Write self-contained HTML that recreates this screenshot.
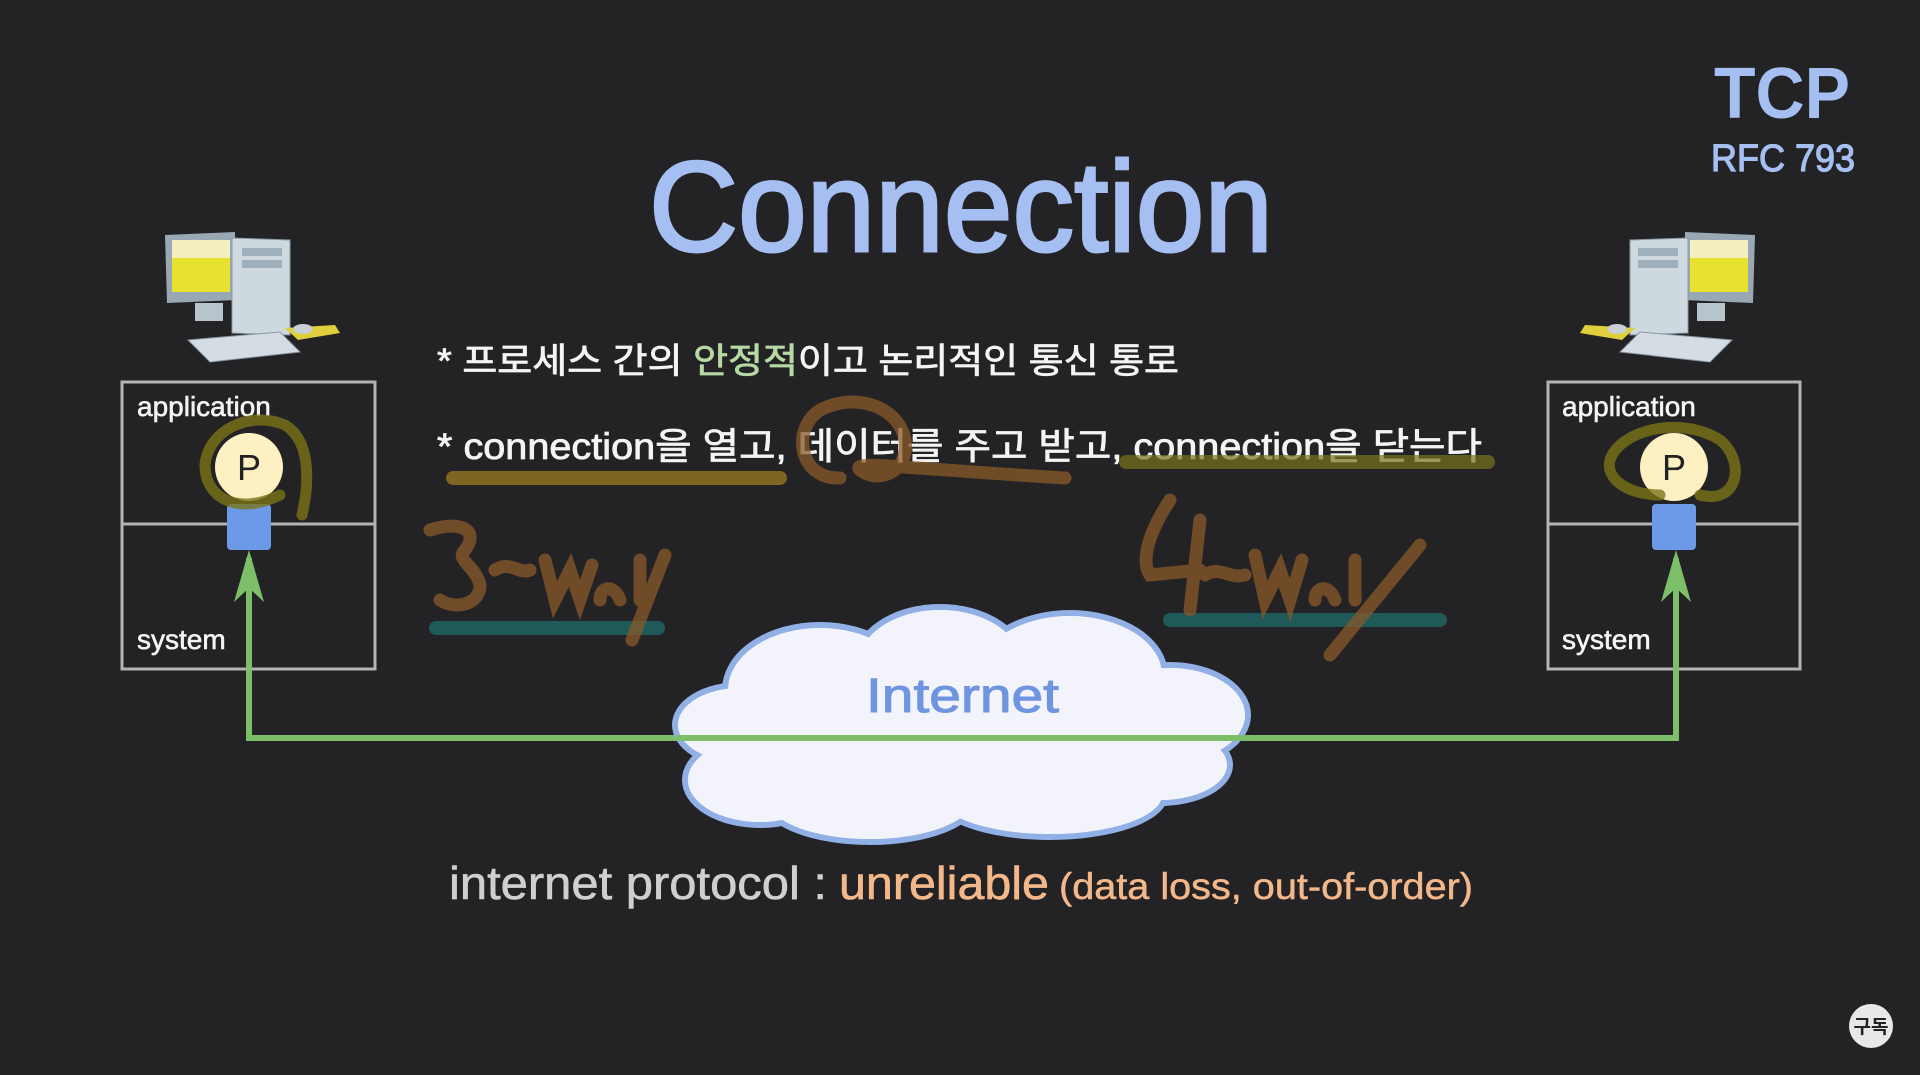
<!DOCTYPE html>
<html><head><meta charset="utf-8"><style>
html,body{margin:0;padding:0;background:#232224;}
svg{display:block}
text{font-family:"Liberation Sans","Noto Sans CJK KR",sans-serif}
</style></head><body>
<svg width="1920" height="1075" viewBox="0 0 1920 1075" xmlns="http://www.w3.org/2000/svg">
<rect width="1920" height="1075" fill="#232224"/>
<text x="1714" y="118" font-size="72" font-weight="bold" fill="#a6bff2" textLength="136" lengthAdjust="spacingAndGlyphs">TCP</text>
<text x="1711" y="171" font-size="38" fill="#a6bff2" stroke="#a6bff2" stroke-width="1.2" textLength="144" lengthAdjust="spacingAndGlyphs">RFC 793</text>
<text x="649" y="251" font-size="128" fill="#a6bff2" stroke="#a6bff2" stroke-width="3" textLength="624" lengthAdjust="spacingAndGlyphs">Connection</text>

<g id="pc">
<polygon points="165,235 235,232 237,300 167,303" fill="#9aa8b4"/>
<rect x="172" y="240" width="58" height="52" fill="#e7e230"/>
<rect x="172" y="240" width="58" height="18" fill="#f3efc0"/>
<polygon points="232,238 290,240 290,335 232,333" fill="#cdd8df" stroke="#8a98a4"/>
<rect x="242" y="248" width="40" height="8" fill="#9fb0bc"/><rect x="242" y="260" width="40" height="8" fill="#9fb0bc"/>
<polygon points="188,340 280,332 300,352 210,362" fill="#d4dde3" stroke="#8a98a4"/>
<polygon points="285,328 335,325 340,333 298,340" fill="#e0cf3a"/>
<ellipse cx="303" cy="329" rx="10" ry="5" fill="#c8d0d6"/>
<rect x="195" y="303" width="28" height="18" fill="#b8c4cc"/>
</g>
<g transform="translate(1920,0) scale(-1,1)"><use href="#pc"/></g>

<g fill="none" stroke="#b4b4b4" stroke-width="3">
<rect x="122" y="382" width="253" height="287"/><line x1="122" y1="524" x2="375" y2="524"/>
<rect x="1548" y="382" width="252" height="287"/><line x1="1548" y1="524" x2="1800" y2="524"/>
</g>
<g font-size="28" fill="#f4f4f4" stroke="#f4f4f4" stroke-width="0.6">
<text x="137" y="416">application</text><text x="137" y="649">system</text>
<text x="1562" y="416">application</text><text x="1562" y="649">system</text>
</g>

<g stroke="#7cbf68" stroke-width="6" fill="none">
<polyline points="249,558 249,738 1676,738 1676,558"/>
</g>
<polygon points="249,550 234,602 249,588 264,602" fill="#7cbf68"/>
<polygon points="1676,550 1661,602 1676,588 1691,602" fill="#7cbf68"/>

<g fill="#f3f4fb" stroke="#90b0e6" stroke-width="6">
<ellipse cx="820" cy="690" rx="95" ry="65"/><ellipse cx="940" cy="665" rx="85" ry="58"/>
<ellipse cx="1070" cy="675" rx="95" ry="62"/><ellipse cx="1170" cy="715" rx="78" ry="50"/>
<ellipse cx="740" cy="725" rx="65" ry="40"/><ellipse cx="760" cy="780" rx="75" ry="45"/>
<ellipse cx="870" cy="800" rx="105" ry="42"/><ellipse cx="1050" cy="795" rx="115" ry="42"/>
<ellipse cx="1160" cy="765" rx="70" ry="38"/>
</g>
<g fill="#f3f4fb">
<ellipse cx="820" cy="690" rx="92" ry="62"/><ellipse cx="940" cy="665" rx="82" ry="55"/>
<ellipse cx="1070" cy="675" rx="92" ry="59"/><ellipse cx="1170" cy="715" rx="75" ry="47"/>
<ellipse cx="740" cy="725" rx="62" ry="37"/><ellipse cx="760" cy="780" rx="72" ry="42"/>
<ellipse cx="870" cy="800" rx="102" ry="39"/><ellipse cx="1050" cy="795" rx="112" ry="39"/>
<ellipse cx="1160" cy="765" rx="67" ry="35"/><ellipse cx="962" cy="740" rx="220" ry="70"/>
</g>
<line x1="676" y1="738" x2="1249" y2="738" stroke="#7cbf68" stroke-width="6"/>
<text x="866" y="712" font-size="48" fill="#6f95e0" stroke="#6f95e0" stroke-width="1" textLength="193" lengthAdjust="spacingAndGlyphs">Internet</text>

<g>
<rect x="227" y="504" width="44" height="46" rx="4" fill="#6c9ae8"/>
<circle cx="249" cy="467" r="34" fill="#fdf1c4"/>
<text x="249" y="480" font-size="36" text-anchor="middle" fill="#222">P</text>
<rect x="1652" y="504" width="44" height="46" rx="4" fill="#6c9ae8"/>
<circle cx="1674" cy="467" r="34" fill="#fdf1c4"/>
<text x="1674" y="480" font-size="36" text-anchor="middle" fill="#222">P</text>
</g>
<g fill="none" stroke="#7a7418" stroke-width="11" stroke-linecap="round" opacity="0.8">
<path d="M280,495 C240,515 205,500 205,465 C208,430 250,410 285,425 C310,440 310,480 302,515"/>
<path d="M1700,495 C1740,505 1745,460 1720,440 C1680,415 1620,430 1610,460 C1605,480 1630,495 1660,495"/>
</g>

<text x="437" y="373" font-size="35" fill="#f4f4f4" stroke="#f4f4f4" stroke-width="0.8" textLength="742" lengthAdjust="spacingAndGlyphs">* 프로세스 간의 <tspan fill="#b6d9a4" stroke="#b6d9a4">안정적</tspan>이고 논리적인 통신 통로</text>
<text x="437" y="459" font-size="37" fill="#f4f4f4" stroke="#f4f4f4" stroke-width="0.8" textLength="1045" lengthAdjust="spacingAndGlyphs">* connection을 열고, 데이터를 주고 받고, connection을 닫는다</text>

<g fill="none" stroke-linecap="round">
<line x1="453" y1="478" x2="780" y2="478" stroke="#b08a1e" stroke-width="14" opacity="0.65"/>
<line x1="1126" y1="462" x2="1488" y2="462" stroke="#77731c" stroke-width="14" opacity="0.7"/>
<line x1="436" y1="628" x2="658" y2="628" stroke="#1f5f5e" stroke-width="14" opacity="0.9"/>
<line x1="1170" y1="620" x2="1440" y2="620" stroke="#1f5f5e" stroke-width="14" opacity="0.9"/>
<g stroke="#8a5a2a" stroke-width="13" opacity="0.75">
<path d="M840,478 C800,480 790,430 820,410 C860,390 900,410 905,440 C910,470 880,485 860,470 C850,460 900,468 1065,478"/>
<path d="M430,530 C460,520 480,530 465,550 C455,560 475,565 480,585 C480,605 455,610 440,600"/>
<path d="M495,570 C510,560 520,575 530,570 M545,560 L555,600 L570,570 L580,600 L592,565 M600,600 C600,585 615,585 620,600 M640,560 L640,600 M665,555 L632,640"/>
<path d="M1170,500 C1150,530 1140,560 1150,575 L1200,570 M1200,520 L1190,610 M1205,575 C1220,565 1230,580 1245,575 M1255,555 L1265,600 L1280,570 L1290,600 L1302,560 M1315,600 C1315,585 1330,585 1335,600 M1355,560 L1355,600 M1420,545 L1330,655"/>
</g>
</g>

<text x="449" y="899" font-size="46" fill="#cfcfcf" stroke="#cfcfcf" stroke-width="0.6" textLength="378" lengthAdjust="spacingAndGlyphs">internet protocol :</text>
<text x="839" y="899" font-size="46" fill="#f3b88a" stroke="#f3b88a" stroke-width="0.6" textLength="210" lengthAdjust="spacingAndGlyphs">unreliable</text>
<text x="1059" y="899" font-size="37" fill="#f3b88a" stroke="#f3b88a" stroke-width="0.5" textLength="414" lengthAdjust="spacingAndGlyphs">(data loss, out-of-order)</text>

<circle cx="1871" cy="1026" r="22" fill="#e8e8e8"/>
<text x="1871" y="1033" font-size="19" font-weight="bold" text-anchor="middle" fill="#222">구독</text>
</svg>
</body></html>
